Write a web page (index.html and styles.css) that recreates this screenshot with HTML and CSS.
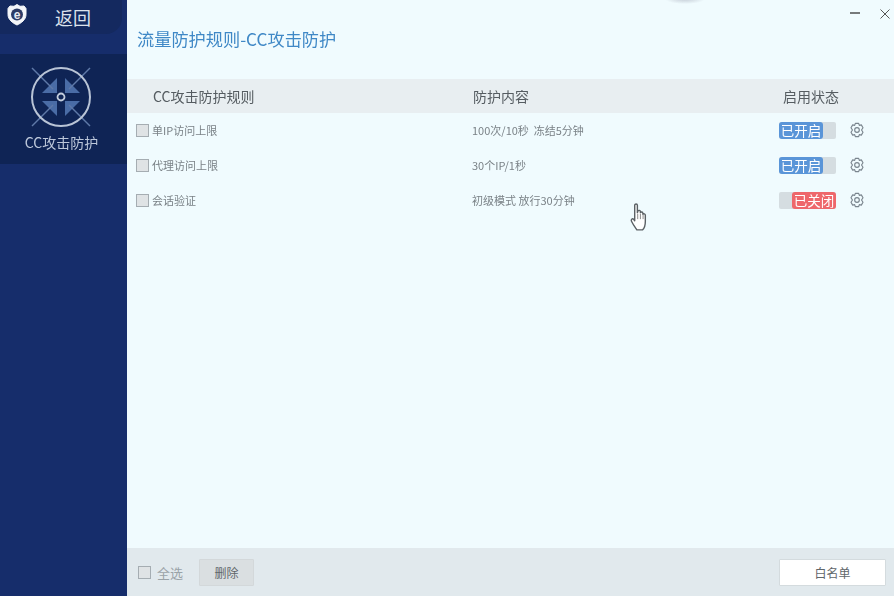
FILE: index.html
```html
<!DOCTYPE html>
<html lang="zh-CN">
<head>
<meta charset="utf-8">
<title>CC攻击防护</title>
<link rel="stylesheet" href="styles.css">
</head>
<body>
<div class="app">
  <aside class="sidebar">
    <div class="back">
      <svg class="logo" width="22" height="24" viewBox="0 0 22 24">
        <path d="M11 1.500l3 1.800 4-.3 2 2.500v6c0 5-4.500 8.500-9 10.500C6.500 20 2 16.500 2 11.500v-6L4 3l4 .3z" fill="#f4f6fa" stroke="#f4f6fa" stroke-linejoin="round" stroke-width="1"/>
        <circle cx="11" cy="11.500" r="6" fill="#2c3b66"/>
        <text x="11" y="15.500" text-anchor="middle" class="logo-e">e</text>
      </svg>
      <span class="back-text">返回</span>
    </div>
    <div class="nav-item">
      <svg class="nav-icon" width="64" height="64" viewBox="-32 -32 64 64">
        <g fill="#4a6ca6">
          <polygon points="-4,-4 -19,-4 -4,-19"/>
          <polygon points="4,-4 19,-4 4,-19"/>
          <polygon points="-4,4 -19,4 -4,19"/>
          <polygon points="4,4 19,4 4,19"/>
        </g>
        <g stroke="#5f79a8" stroke-width="1.500">
          <line x1="-29" y1="-29" x2="-8" y2="-8"/>
          <line x1="29" y1="-29" x2="8" y2="-8"/>
          <line x1="-29" y1="29" x2="-8" y2="8"/>
          <line x1="29" y1="29" x2="8" y2="8"/>
        </g>
        <circle r="29" fill="none" stroke="#b9c4d6" stroke-width="2"/>
        <circle r="3.500" fill="#0f2455" stroke="#c3cddd" stroke-width="1.800"/>
      </svg>
      <span class="nav-label">CC攻击防护</span>
    </div>
  </aside>

  <main class="main">
    <header class="titlebar">
      <h1 class="title">流量防护规则-CC攻击防护</h1>
      <div class="winctl">
        <svg width="10" height="10" viewBox="0 0 10 10"><line x1="0" y1="4" x2="10" y2="4" stroke="#333" stroke-width="1.300"/></svg>
        <svg width="10" height="10" viewBox="0 0 10 10"><path d="M0.500 0.500l9 9M9.500 0.500l-9 9" stroke="#555" stroke-width="1" fill="none"/></svg>
      </div>
    </header>

    <div class="grid head">
      <div class="head-first">CC攻击防护规则</div>
      <div class="head-second">防护内容</div>
      <div class="head-status">启用状态</div>
    </div>

    <div class="grid row">
      <label class="rule"><span class="check"></span>单IP访问上限</label>
      <div>100次/10秒&nbsp; 冻结5分钟</div>
      <div class="status">
        <span class="toggle on"><span class="knob">已开启</span></span>
        <svg class="gear" width="16" height="16" viewBox="0 0 24 24"><path d="M9.500 2h5l1 3 3-.7 2.500 4.300L18.800 12l2.200 3.400-2.500 4.300-3-.7-1 3h-5l-1-3-3 .7L3 15.400 5.200 12 3 8.600l2.500-4.300 3 .7z" fill="none" stroke="#7a858e" stroke-width="1.700" stroke-linejoin="round"/><circle cx="12" cy="12" r="3.500" fill="none" stroke="#7a858e" stroke-width="1.700"/></svg>
      </div>
    </div>
    <div class="grid row">
      <label class="rule"><span class="check"></span>代理访问上限</label>
      <div>30个IP/1秒</div>
      <div class="status">
        <span class="toggle on"><span class="knob">已开启</span></span>
        <svg class="gear" width="16" height="16" viewBox="0 0 24 24"><path d="M9.500 2h5l1 3 3-.7 2.500 4.300L18.800 12l2.200 3.400-2.500 4.300-3-.7-1 3h-5l-1-3-3 .7L3 15.400 5.200 12 3 8.600l2.500-4.300 3 .7z" fill="none" stroke="#7a858e" stroke-width="1.700" stroke-linejoin="round"/><circle cx="12" cy="12" r="3.500" fill="none" stroke="#7a858e" stroke-width="1.700"/></svg>
      </div>
    </div>
    <div class="grid row">
      <label class="rule"><span class="check"></span>会话验证</label>
      <div>初级模式 放行30分钟</div>
      <div class="status">
        <span class="toggle off"><span class="knob">已关闭</span></span>
        <svg class="gear" width="16" height="16" viewBox="0 0 24 24"><path d="M9.500 2h5l1 3 3-.7 2.500 4.300L18.800 12l2.200 3.400-2.500 4.300-3-.7-1 3h-5l-1-3-3 .7L3 15.400 5.200 12 3 8.600l2.500-4.300 3 .7z" fill="none" stroke="#7a858e" stroke-width="1.700" stroke-linejoin="round"/><circle cx="12" cy="12" r="3.500" fill="none" stroke="#7a858e" stroke-width="1.700"/></svg>
      </div>
    </div>

    <footer class="footer">
      <label class="all"><span class="check"></span>全选</label>
      <button class="btn del">删除</button>
      <button class="btn white">白名单</button>
    </footer>
  </main>

  <div class="glow"></div>
  <svg class="cursor" width="20" height="29" viewBox="0 0 18 27">
    <path d="M5 2c0-1.500 2.500-1.500 2.500 0v7l.5-1.500c.5-1 2.200-.8 2.300.5v1c.5-1 2.200-.8 2.300.5v1c.6-.8 2.300-.5 2.300.8V17c0 4-1.500 7-2.500 8H7c-1-1.500-3-4-5-8-.8-1.500.8-3 2-1.800L5 16.500z" fill="#fff" stroke="#5a6064" stroke-width="1.300" stroke-linejoin="round"/>
    <path d="M7.800 10v5M10.300 10v5M12.800 11v4" stroke="#777" stroke-width=".8" fill="none"/>
  </svg>
</div>
</body>
</html>
```
FILE: styles.css
```css
* { box-sizing: border-box; }
html, body { margin: 0; height: 100%; overflow: hidden; }
body { background: #f0fbfe; font-family: "Noto Sans CJK SC", "Liberation Sans", sans-serif; }

.app {
  position: relative;
  display: flex;
  width: 894px;
  height: 596px;
  filter: blur(0.55px);
}

.sidebar {
  width: 127px;
  flex: none;
  background: #162d6b;
  display: flex;
  flex-direction: column;
}
.back {
  width: 122px;
  height: 34px;
  background: #14295f;
  border-bottom-right-radius: 16px;
  display: flex;
  align-items: center;
  padding-left: 6px;
  gap: 27px;
}
.logo { flex: none; margin-top: -4px; }
.logo-e { font: bold 12px "Liberation Sans", sans-serif; fill: #e6eaf2; }
.back-text { font-size: 18px; line-height: 1; color: #dde3ec; }

.nav-item {
  margin-top: 20px;
  height: 110px;
  background: #0f2455;
  display: flex;
  flex-direction: column;
  align-items: center;
  padding-top: 11px;
}
.nav-icon { margin-left: -5px; flex: none; }
.nav-label { margin-top: 4px; margin-left: -4px; font-size: 14px; line-height: 18px; color: #bcc7da; white-space: nowrap; }

.main { flex: 1; display: flex; flex-direction: column; min-width: 0; }

.titlebar {
  height: 79px;
  flex: none;
  display: flex;
  justify-content: space-between;
  align-items: flex-start;
  padding-left: 10px;
}
.title { margin: 28px 0 0; font-size: 17.200px; line-height: 22px; font-weight: 400; color: #3f88c6; }
.winctl { display: flex; gap: 20px; padding: 9px 4px 0 0; }

.grid { display: grid; grid-template-columns: 345px 307px 1fr; align-items: center; }
.head { height: 34px; flex: none; background: #e8eef1; font-size: 14px; color: #555c61; }
.head-first { padding-left: 26px; }
.head-second { padding-left: 1px; }
.head-status { padding-left: 4px; }
.row { height: 35px; flex: none; font-size: 11px; color: #7a8287; padding-bottom: 1px; }

.rule { display: flex; align-items: center; gap: 3px; padding-left: 9px; }
.check { width: 13px; height: 13px; flex: none; background: #dfe3e5; border: 1px solid #a5adb2; }

.status { display: flex; align-items: center; gap: 13px; }
.toggle { display: flex; width: 57px; height: 17px; background: #d5dde1; border-radius: 2px; }
.toggle.off { justify-content: flex-end; }
.knob {
  width: 44px;
  border-radius: 3px;
  font-size: 13.500px;
  line-height: 17px;
  text-align: center;
  color: #fff;
  white-space: nowrap;
}
.on .knob { background: #5a95d8; }
.off .knob { background: #ee676b; }
.gear { flex: none; }

.footer {
  margin-top: auto;
  height: 48px;
  flex: none;
  background: #e1e9ed;
  display: flex;
  align-items: center;
  padding: 0 8px 0 11px;
}
.all { display: flex; align-items: center; gap: 6px; font-size: 13px; color: #9aa3a8; }
.btn { font-family: inherit; font-size: 12px; color: #5f666a; border-radius: 1px; padding: 0; }
.del { margin-left: 16px; width: 55px; height: 27px; background: #dadfe1; border: 1px solid #d3d8da; }
.white { margin-left: auto; width: 107px; height: 27px; background: #fff; border: 1px solid #d4dbde; }

.glow {
  position: absolute;
  left: 665px;
  top: -6px;
  width: 40px;
  height: 10px;
  background: radial-gradient(closest-side, #c4ccd6, rgba(196, 204, 214, 0));
}
.cursor { position: absolute; left: 629px; top: 203px; }
```
